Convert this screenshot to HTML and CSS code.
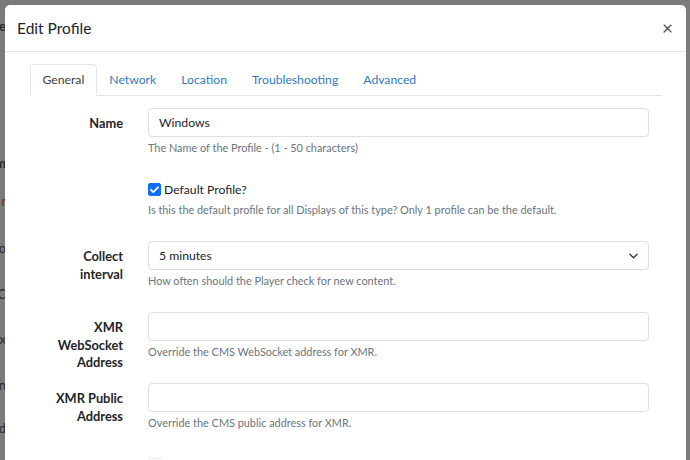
FILE: index.html
```html
<!DOCTYPE html>
<html lang="en">
<head>
<meta charset="utf-8">
<title>Edit Profile</title>
<link rel="stylesheet" href="styles.css">
</head>
<body>
<div class="backdrop-left">
  <span class="bg-row b1">e</span>
  <span class="bg-row b2">m</span>
  <span class="bg-row b3">r</span>
  <span class="bg-row b4">o</span>
  <span class="bg-row b5">C</span>
  <span class="bg-row b6">x</span>
  <span class="bg-row b7">n</span>
  <span class="bg-row b8">d</span>
</div>
<div class="modal">
  <div class="modal-header">
    <h1 class="modal-title">Edit Profile</h1>
    <span class="close">&times;</span>
  </div>
  <div class="modal-body">
    <ul class="tabs">
      <li class="tab active">General</li>
      <li class="tab">Network</li>
      <li class="tab">Location</li>
      <li class="tab">Troubleshooting</li>
      <li class="tab">Advanced</li>
    </ul>
    <div class="tab-content">
      <div class="form-row">
        <label class="form-label">Name</label>
        <div class="field">
          <div class="input">Windows</div>
          <div class="help">The Name of the Profile - (1 - 50 characters)</div>
        </div>
      </div>
      <div class="form-row">
        <div class="form-label"></div>
        <div class="field">
          <div class="check-line"><span class="checkbox checked"><svg viewBox="0 0 13 13" width="13" height="13"><path d="M3 6.8l2.3 2.3L10 4.3" fill="none" stroke="#fff" stroke-width="1.8" stroke-linecap="round" stroke-linejoin="round"/></svg></span><span class="check-text">Default Profile?</span></div>
          <div class="help">Is this the default profile for all Displays of this type? Only 1 profile can be the default.</div>
        </div>
      </div>
      <div class="form-row">
        <label class="form-label">Collect interval</label>
        <div class="field">
          <div class="input select">5 minutes<svg class="chev" viewBox="0 0 10 6" width="9" height="6"><path d="M1 1l4 4 4-4" fill="none" stroke="#343a40" stroke-width="1.5" stroke-linecap="round" stroke-linejoin="round"/></svg></div>
          <div class="help">How often should the Player check for new content.</div>
        </div>
      </div>
      <div class="form-row">
        <label class="form-label">XMR WebSocket Address</label>
        <div class="field">
          <div class="input"></div>
          <div class="help">Override the CMS WebSocket address for XMR.</div>
        </div>
      </div>
      <div class="form-row">
        <label class="form-label">XMR Public Address</label>
        <div class="field">
          <div class="input"></div>
          <div class="help">Override the CMS public address for XMR.</div>
        </div>
      </div>
      <div class="form-row">
        <div class="form-label"></div>
        <div class="field">
          <div class="check-line faded"><span class="checkbox"></span><span class="check-text">Enable stats reporting?</span></div>
        </div>
      </div>
    </div>
  </div>
</div>
</body>
</html>
```
FILE: styles.css
```css
* { box-sizing: border-box; }
html, body { margin: 0; padding: 0; }
body {
  width: 690px;
  height: 460px;
  overflow: hidden;
  background: #7b7b7b;
  font-family: "Lato", "Noto Sans", sans-serif;
  color: #212529;
  position: relative;
}
.backdrop-left {
  position: absolute;
  left: 0; top: 0;
  width: 5px; height: 460px;
  overflow: hidden;
}
.bg-row {
  position: absolute;
  right: -1px;
  font-size: 13px;
  color: #2a2a2a;
  line-height: 16px;
}
.b1 { top: 18px; font-weight: bold; }
.b2 { top: 155px; font-weight: bold; }
.b3 { top: 193px; color: #6b2e1e; }
.b4 { top: 240px; }
.b5 { top: 286px; }
.b6 { top: 331px; }
.b7 { top: 377px; }
.b8 { top: 420px; }

.modal {
  margin: 5px 0 0 5px;
  width: 681px;
  height: 470px;
  background: #fff;
  border-radius: 5px;
  position: relative;
}
.modal-header {
  height: 47px;
  border-bottom: 1px solid #e3e6e9;
  display: flex;
  align-items: center;
  justify-content: space-between;
  padding: 0 13px 0 12px;
}
.modal-title {
  margin: 0;
  font-size: 15.5px;
  font-weight: 400;
  color: #212529;
  padding-bottom: 1px;
}
.close {
  font-size: 19px;
  line-height: 20px;
  color: #555;
  font-weight: 400;
}
.modal-body {
  padding: 12px 24px 0 25px;
}
.tabs {
  list-style: none;
  margin: 0;
  padding: 0;
  display: flex;
  border-bottom: 1px solid #e3e6e9;
  height: 32px;
}
.tab {
  padding: 0 11.5px;
  height: 32px;
  line-height: 30px;
  font-size: 12.2px;
  color: #2f7bc1;
  border: 1px solid transparent;
  border-radius: 4px 4px 0 0;
  margin-bottom: -1px;
}
.tab.active {
  color: #3a3f44;
  border-color: #e3e6e9 #e3e6e9 #fff;
  background: #fff;
}
.tab-content {
  padding: 12px 13px 0 0;
}
.form-row {
  display: grid;
  grid-template-columns: 93px 1fr;
  column-gap: 25px;
  margin-bottom: 23px;
}
.form-label {
  height: 0;
  overflow: visible;
  text-align: right;
  font-weight: 700;
  font-size: 12.8px;
  line-height: 17.5px;
  padding: 7px 0 0 13px;
  color: #212529;
}
.input {
  height: 29px;
  border: 1px solid #dcdfe3;
  border-radius: 4px;
  padding: 0 10px;
  font-size: 12.2px;
  line-height: 27px;
  color: #212529;
  position: relative;
}
.select .chev {
  position: absolute;
  right: 10px;
  top: 11px;
}
.help {
  margin-top: 3px;
  font-size: 10.9px;
  line-height: 16px;
  color: #6c757d;
}
.check-line {
  display: flex;
  align-items: center;
  height: 20px;
  font-size: 12.2px;
}
.checkbox {
  width: 13px;
  height: 13px;
  border-radius: 2px;
  border: 1px solid #b9bec4;
  display: inline-flex;
  margin-right: 3px;
  background: #fff;
}
.checkbox.checked {
  background: #0d6efd;
  border-color: #0d6efd;
}
.checkbox.checked svg { margin: -1px; }
.check-text { color: #212529; }
.faded { opacity: 0.25; }
```
